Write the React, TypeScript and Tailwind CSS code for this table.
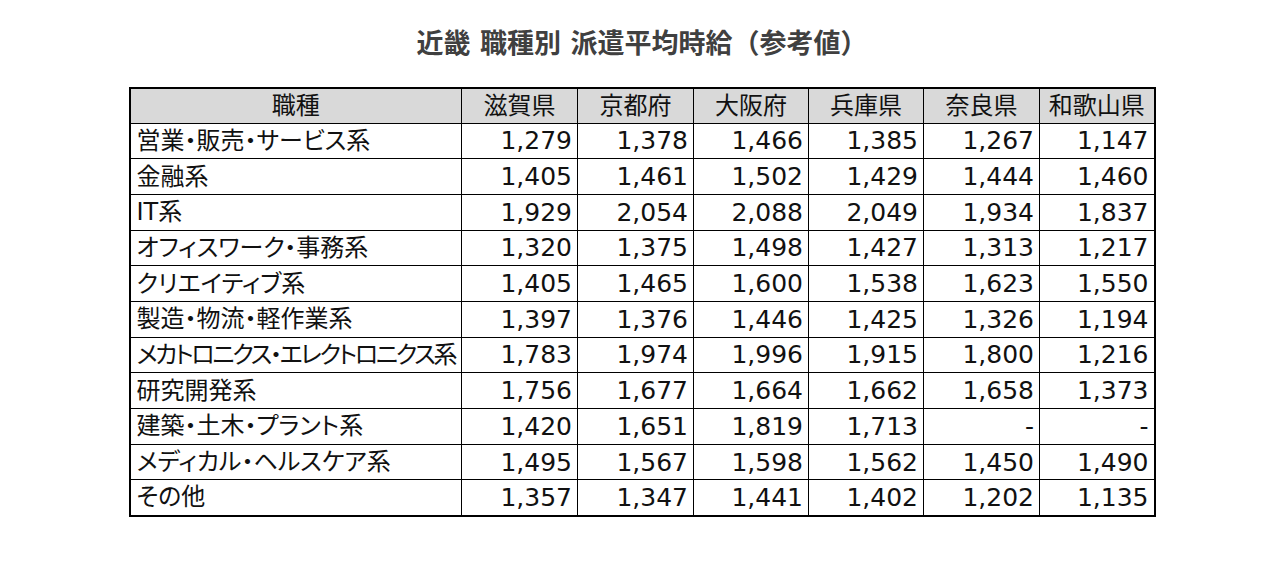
const heads = ['滋賀県', '京都府', '大阪府', '兵庫県', '奈良県', '和歌山県']

const rows: [string, string[]][] = [
  ['営業・販売・サービス系', ['1,279', '1,378', '1,466', '1,385', '1,267', '1,147']],
  ['金融系', ['1,405', '1,461', '1,502', '1,429', '1,444', '1,460']],
  ['IT系', ['1,929', '2,054', '2,088', '2,049', '1,934', '1,837']],
  ['オフィスワーク・事務系', ['1,320', '1,375', '1,498', '1,427', '1,313', '1,217']],
  ['クリエイティブ系', ['1,405', '1,465', '1,600', '1,538', '1,623', '1,550']],
  ['製造・物流・軽作業系', ['1,397', '1,376', '1,446', '1,425', '1,326', '1,194']],
  ['メカトロニクス・エレクトロニクス系', ['1,783', '1,974', '1,996', '1,915', '1,800', '1,216']],
  ['研究開発系', ['1,756', '1,677', '1,664', '1,662', '1,658', '1,373']],
  ['建築・土木・プラント系', ['1,420', '1,651', '1,819', '1,713', '-', '-']],
  ['メディカル・ヘルスケア系', ['1,495', '1,567', '1,598', '1,562', '1,450', '1,490']],
  ['その他', ['1,357', '1,347', '1,441', '1,402', '1,202', '1,135']],
]

const jp = "font-['DejaVu_Sans','Noto_Sans_CJK_JP',sans-serif]"

export default function App() {
  return (
    <div className="min-h-[578px] w-[1284px] bg-white pt-[26px]">
      <h1 className={`${jp} text-center text-[27px] leading-[36px] font-bold text-[#404040]`}>
        近畿 職種別 派遣平均時給（参考値）
      </h1>
      <table
        className={`${jp} mx-auto mt-[25px] w-[1027px] table-fixed border-collapse border-2 border-black text-[24px] text-[#111] [font-feature-settings:'palt']`}
      >
        <colgroup>
          <col className="w-[332px]" />
          <col className="w-[116px]" />
          <col className="w-[116px]" />
          <col className="w-[115px]" />
          <col className="w-[115px]" />
          <col className="w-[116px]" />
          <col className="w-[115px]" />
        </colgroup>
        <thead>
          <tr className="h-[35px] bg-[#d9d9d9]">
            <th className="border border-black p-0 text-center font-normal leading-none">職種</th>
            {heads.map((h) => (
              <th key={h} className="border border-black p-0 text-center font-normal leading-none">
                {h}
              </th>
            ))}
          </tr>
        </thead>
        <tbody>
          {rows.map(([name, vals]) => (
            <tr key={name} className="h-[35.7px]">
              <td
                className={`overflow-hidden border border-black py-0 pl-[6px] leading-none whitespace-nowrap ${
                  name.length > 15 ? 'tracking-[-2.3px]' : ''
                }`}
              >
                {name}
              </td>
              {vals.map((v, i) => (
                <td key={i} className="border border-black py-0 pr-[5px] text-right text-[25px] leading-none">
                  {v}
                </td>
              ))}
            </tr>
          ))}
        </tbody>
      </table>
    </div>
  )
}
